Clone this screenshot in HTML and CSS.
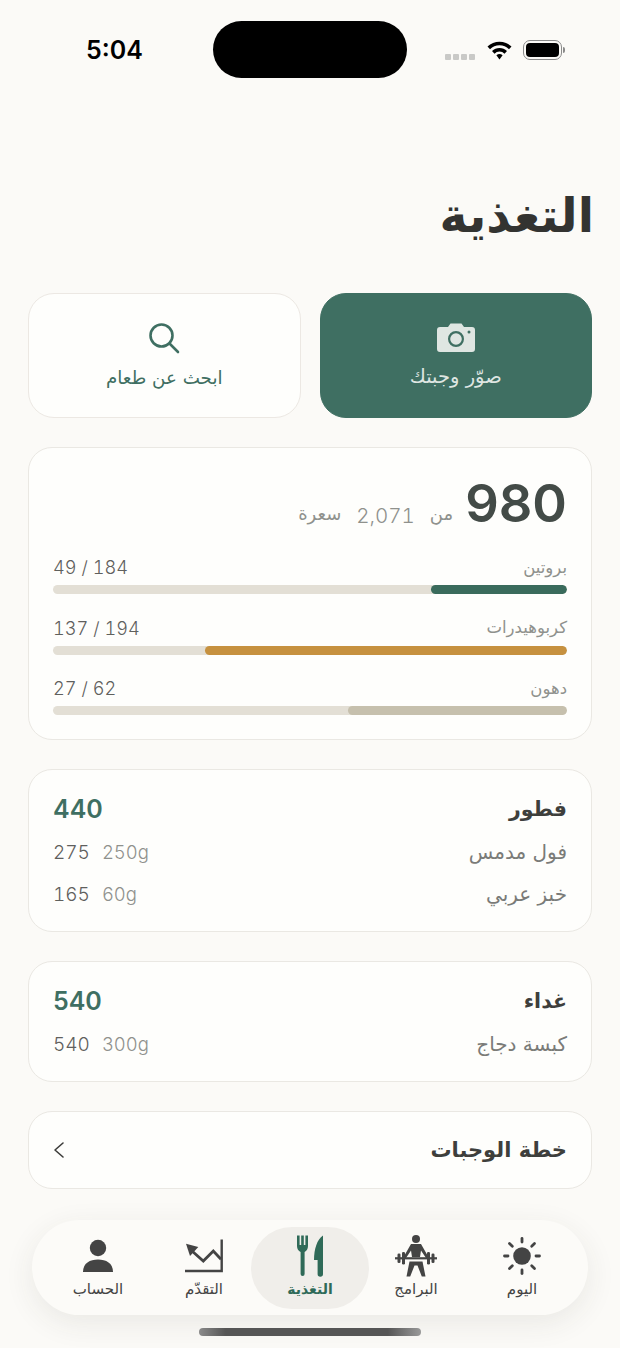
FILE: index.html
```html
<!DOCTYPE html>
<html lang="ar" dir="rtl">
<head>
<meta charset="UTF-8" />
<meta name="viewport" content="width=device-width, initial-scale=1.0"/>
<link rel="stylesheet" href="styles.css">
</head>
<body>

<div class="screen">
  <!-- Status bar -->
  <div class="status" dir="ltr">
    <span class="status__time">5:04</span>
    <div class="status__island"></div>
    <div class="status__icons">
      <div class="status__dots"><i></i><i></i><i></i><i></i></div>
      <svg class="status__wifi" viewBox="0 0 25 20" width="25" height="20" fill="#000">
        <path d="M0.5 6.6 A17 17 0 0 1 24.5 6.6 L22 9.3 A13.4 13.4 0 0 0 3 9.3 Z"/>
        <path d="M5 11 A10.6 10.6 0 0 1 20 11 L17.5 13.7 A7 7 0 0 0 7.5 13.7 Z"/>
        <path d="M9.4 15.3 A4.6 4.6 0 0 1 15.6 15.3 L12.5 19.6 Z"/>
      </svg>
      <div class="status__battery"><div class="status__level"></div></div>
      <div class="status__cap"></div>
    </div>
  </div>

  <h1 class="page-title">التغذية</h1>

  <!-- Actions -->
  <div class="actions">
    <button class="action action--primary">
      <svg viewBox="0 0 38 30" width="38" height="30">
        <path fill="#dfe6e2" fill-rule="evenodd" d="M3 4 H11 L13.5 0.5 H24.5 L27 4 H35 A3 3 0 0 1 38 7 V26 A3 3 0 0 1 35 29 H3 A3 3 0 0 1 0 26 V7 A3 3 0 0 1 3 4 Z M19 8 A8 8 0 1 0 19 24 A8 8 0 1 0 19 8 Z M19 10.2 A5.8 5.8 0 1 1 19 21.8 A5.8 5.8 0 1 1 19 10.2 Z M32 7.5 A1.5 1.5 0 1 0 32 10.5 A1.5 1.5 0 1 0 32 7.5 Z"/>
      </svg>
      <span>صوّر وجبتك</span>
    </button>
    <button class="action">
      <svg viewBox="0 0 32 32" width="32" height="32" fill="none" stroke="#3f6f62" stroke-width="2.6" stroke-linecap="round">
        <circle cx="13.5" cy="13.5" r="11"/>
        <path d="M21.5 21.5 L30 30"/>
      </svg>
      <span>ابحث عن طعام</span>
    </button>
  </div>

  <!-- Calories -->
  <section class="card card--summary">
    <div class="cal">
      <span class="cal__value">980</span>
      <span class="cal__of">من</span>
      <span class="cal__goal">2,071</span>
      <span class="cal__of">سعرة</span>
    </div>
    <div class="macro">
      <div class="macro__head"><span>بروتين</span><span class="macro__num" dir="ltr">49 / 184</span></div>
      <div class="macro__bar"><div class="macro__fill macro__fill--green" style="width:26.5%"></div></div>
    </div>
    <div class="macro">
      <div class="macro__head"><span>كربوهيدرات</span><span class="macro__num" dir="ltr">137 / 194</span></div>
      <div class="macro__bar"><div class="macro__fill macro__fill--gold" style="width:70.4%"></div></div>
    </div>
    <div class="macro">
      <div class="macro__head"><span>دهون</span><span class="macro__num" dir="ltr">27 / 62</span></div>
      <div class="macro__bar"><div class="macro__fill macro__fill--sand" style="width:42.6%"></div></div>
    </div>
  </section>

  <!-- Meals -->
  <section class="card meal">
    <div class="meal__head"><h2>فطور</h2><span class="meal__cal">440</span></div>
    <div class="meal__row"><span>فول مدمس</span><span class="meal__nums" dir="ltr"><b>275</b><em>250g</em></span></div>
    <div class="meal__row"><span>خبز عربي</span><span class="meal__nums" dir="ltr"><b>165</b><em>60g</em></span></div>
  </section>

  <section class="card meal">
    <div class="meal__head"><h2>غداء</h2><span class="meal__cal">540</span></div>
    <div class="meal__row"><span>كبسة دجاج</span><span class="meal__nums" dir="ltr"><b>540</b><em>300g</em></span></div>
  </section>

  <section class="card plan">
    <h2>خطة الوجبات</h2>
    <svg viewBox="0 0 12 18" width="12" height="18" fill="none" stroke="#3c3c3a" stroke-width="1.6" stroke-linecap="round" stroke-linejoin="round">
      <path d="M10 2 L2 9 L10 16"/>
    </svg>
  </section>

  <!-- Tab bar -->
  <nav class="tabs">
    <div class="tab">
      <div class="tab__icon">
        <svg viewBox="0 0 40 40" width="40" height="40" fill="#444">
          <circle cx="20" cy="20" r="8.8"/>
          <g stroke="#444" stroke-width="2.8" stroke-linecap="round">
            <path d="M20 2.5 V6"/><path d="M20 34 V37.5"/><path d="M2.5 20 H6"/><path d="M34 20 H37.5"/>
            <path d="M7.5 7.5 L10.3 10.2"/><path d="M32.5 7.5 L29.7 10.2"/><path d="M7.5 32.5 L10.3 29.8"/><path d="M32.5 32.5 L29.7 29.8"/>
          </g>
        </svg>
      </div>
      <span>اليوم</span>
    </div>
    <div class="tab">
      <div class="tab__icon">
        <svg viewBox="0 0 44 44" width="44" height="44" fill="#444">
          <circle cx="22" cy="5" r="4"/>
          <path d="M17 10 H27 L35 24 H32 L27 16.5 L26 23 H18 L17 16.5 L12 24 H9 Z"/>
          <rect x="1" y="23.2" width="42" height="2.2"/>
          <rect x="3.5" y="19.5" width="3" height="9.6" rx="1.3"/>
          <rect x="8" y="18" width="3" height="12.6" rx="1.3"/>
          <rect x="33" y="18" width="3" height="12.6" rx="1.3"/>
          <rect x="37.5" y="19.5" width="3" height="9.6" rx="1.3"/>
          <path d="M15.5 27.6 H28.5 L31.5 42.5 H27.8 L23.5 31.5 H20.5 L16.2 42.5 H12.5 Z"/>
        </svg>
      </div>
      <span>البرامج</span>
    </div>
    <div class="tab tab--active">
      <div class="tab__icon">
        <svg viewBox="0 0 26 42" width="26" height="42" fill="#2f6a58">
          <path d="M0 0.5 H2.6 V10 H4.2 V0.5 H6.8 V10 H8.4 V0.5 H11 V11 C11 14 9.6 16 7.6 17 V39 A2 2 0 0 1 3.6 39 V17 C1.4 16 0 14 0 11 Z"/>
          <path d="M26 0.5 V39 A2.7 2.7 0 0 1 20.6 39 V25 H17 C17 14 20 4.5 26 0.5 Z"/>
        </svg>
      </div>
      <span>التغذية</span>
    </div>
    <div class="tab">
      <div class="tab__icon">
        <svg viewBox="0 0 40 34" width="40" height="34" fill="none" stroke="#444">
          <path d="M37.7 0.5 V32 H1" stroke-width="2.4"/>
          <path d="M8 12 L19.3 22 L29.3 12 L37 20.3" stroke-width="2.8"/>
          <path d="M2 4.7 L14.3 8 L6 17 Z" fill="#444" stroke="none"/>
        </svg>
      </div>
      <span>التقدّم</span>
    </div>
    <div class="tab">
      <div class="tab__icon">
        <svg viewBox="0 0 32 34" width="32" height="34" fill="#444">
          <circle cx="16" cy="9" r="8.2"/>
          <path d="M1 33 C1 24 8 20.5 16 20.5 C24 20.5 31 24 31 33 Z"/>
        </svg>
      </div>
      <span>الحساب</span>
    </div>
  </nav>

  <div class="home-bar"></div>
</div>

</body>
</html>
```

FILE: styles.css
```css
:root {
  --bg: #fbfaf7;
  --card: #fefefc;
  --line: #eae8e3;
  --green: #3f6f62;
  --title: #333331;
  --text: #7a7b78;
  --muted: #8f918d;
}

* {
  box-sizing: border-box;
}

body {
  margin: 0;
  background: var(--bg);
  font-family: "DejaVu Sans", "Noto Sans", sans-serif;
}

.screen {
  width: 620px;
  height: 1348px;
  padding: 0 28px;
  overflow: hidden;
}

/* Status bar */
.status {
  display: flex;
  align-items: center;
  height: 57px;
  margin-top: 21px;
  padding-left: 58px;
}

.status__time {
  width: 127px;
  font-family: Inter, sans-serif;
  font-size: 25px;
  font-weight: 600;
  color: #000;
}

.status__island {
  width: 194px;
  height: 57px;
  background: #000;
  border-radius: 29px;
}

.status__icons {
  display: flex;
  align-items: center;
  margin-left: 38px;
}

.status__dots {
  display: flex;
  gap: 2.5px;
  margin-top: 15px;
  margin-right: 12px;
}

.status__dots i {
  width: 5.5px;
  height: 5.5px;
  background: #c9c9c7;
  border-radius: 1px;
}

.status__wifi {
  margin-right: 11px;
}

.status__battery {
  width: 39px;
  height: 20px;
  padding: 2px;
  border: 1.5px solid #8a8a8a;
  border-radius: 7px;
}

.status__level {
  height: 100%;
  background: #000;
  border-radius: 4px;
}

.status__cap {
  width: 2px;
  height: 6px;
  margin-left: 1px;
  background: #8a8a8a;
  border-radius: 0 2px 2px 0;
}

.page-title {
  margin: 112px -2px 51px 0;
  font-size: 47.5px;
  line-height: 52px;
  font-weight: 700;
  color: var(--title);
}

/* Buttons */
.actions {
  display: flex;
  gap: 19px;
  margin-bottom: 29px;
}

.action {
  flex: 1;
  height: 125px;
  display: flex;
  flex-direction: column;
  align-items: center;
  justify-content: center;
  gap: 13px;
  background: var(--card);
  border: 1px solid #ece8e3;
  border-radius: 26px;
  font-family: inherit;
  font-size: 18.3px;
  line-height: 22px;
  color: var(--green);
}

.action--primary {
  background: var(--green);
  border-color: var(--green);
  color: #dfe6e2;
  font-size: 19.5px;
}

/* Cards */
.card {
  background: var(--card);
  border: 1px solid var(--line);
  border-radius: 24px;
  margin-bottom: 29px;
  padding: 0 24px;
}

.card h2 {
  margin: 0;
  font-weight: 700;
  color: #3e3f3c;
}

.card--summary {
  height: 293px;
  padding-top: 25px;
}

.cal {
  display: flex;
  align-items: flex-end;
  gap: 15px;
  height: 60px;
  margin-bottom: 20px;
  color: var(--muted);
  font-size: 18px;
}

.cal__value {
  margin-left: -3px;
  font-family: Inter, sans-serif;
  font-size: 52.5px;
  line-height: 60px;
  font-weight: 600;
  color: #434b47;
}

.cal__goal {
  padding-bottom: 5px;
  font-family: Inter, sans-serif;
  font-size: 20.5px;
  font-weight: 300;
  font-variant-numeric: tabular-nums;
}

.cal__of {
  padding-bottom: 9px;
}

.macro {
  margin-bottom: 19.5px;
}

.macro__head {
  display: flex;
  justify-content: space-between;
  align-items: center;
  height: 28px;
  margin-bottom: 4px;
  font-size: 16.5px;
  color: var(--muted);
}

.macro__num {
  font-family: Inter, sans-serif;
  font-size: 18.2px;
  font-weight: 300;
  font-variant-numeric: tabular-nums;
  color: #5f605d;
}

.macro__bar {
  height: 9px;
  background: #e3dfd5;
  border-radius: 5px;
  overflow: hidden;
}

.macro__fill {
  height: 100%;
  border-radius: 5px;
}

.macro__fill--green { background: #3a6b5c; }
.macro__fill--gold { background: #c6913f; }
.macro__fill--sand { background: #c6c0ad; }

.meal {
  padding-top: 21px;
  padding-bottom: 16px;
}

.meal__head {
  display: flex;
  justify-content: space-between;
  align-items: center;
  height: 36px;
  margin-bottom: 4px;
}

.meal__head h2 {
  font-size: 20.5px;
}

.meal__cal {
  font-family: Inter, sans-serif;
  font-size: 25px;
  font-weight: 600;
  color: var(--green);
}

.meal__row {
  display: flex;
  justify-content: space-between;
  align-items: center;
  height: 42px;
  font-size: 20px;
  color: var(--text);
}

.meal__nums {
  display: flex;
  align-items: baseline;
  gap: 12px;
  font-family: Inter, sans-serif;
  font-variant-numeric: tabular-nums;
}

.meal__nums b {
  font-size: 19px;
  font-weight: 300;
  color: #5f605d;
}

.meal__nums em {
  font-size: 18.5px;
  font-style: normal;
  font-weight: 300;
  color: var(--muted);
}

.plan {
  display: flex;
  justify-content: space-between;
  align-items: center;
  height: 78px;
}

.plan h2 {
  font-size: 21px;
}

/* Tab bar */
.tabs {
  display: flex;
  align-items: center;
  width: 556px;
  height: 95px;
  margin: 31px 4px 0;
  padding: 0 13px;
  background: #fcfbf8;
  border-radius: 48px;
  box-shadow: 0 8px 30px rgba(60, 55, 45, 0.09);
}

.tab {
  flex: none;
  width: 106px;
  height: 82px;
  display: flex;
  flex-direction: column;
  align-items: center;
  gap: 2px;
  padding-top: 7px;
  border-radius: 42px;
  font-size: 15px;
  line-height: 18px;
  color: #444;
}

.tab__icon {
  height: 44px;
  display: flex;
  align-items: center;
}

.tab--active {
  width: 118px;
  margin: 0 -6px;
  background: #f0eeea;
  color: #2f6a58;
  font-size: 14px;
  font-weight: 700;
}

.home-bar {
  width: 222px;
  height: 8px;
  margin: 13px auto 0;
  background: linear-gradient(to right, #8a8a8a, #555 12%, #555 85%, #999);
  border-radius: 4px;
}
```
